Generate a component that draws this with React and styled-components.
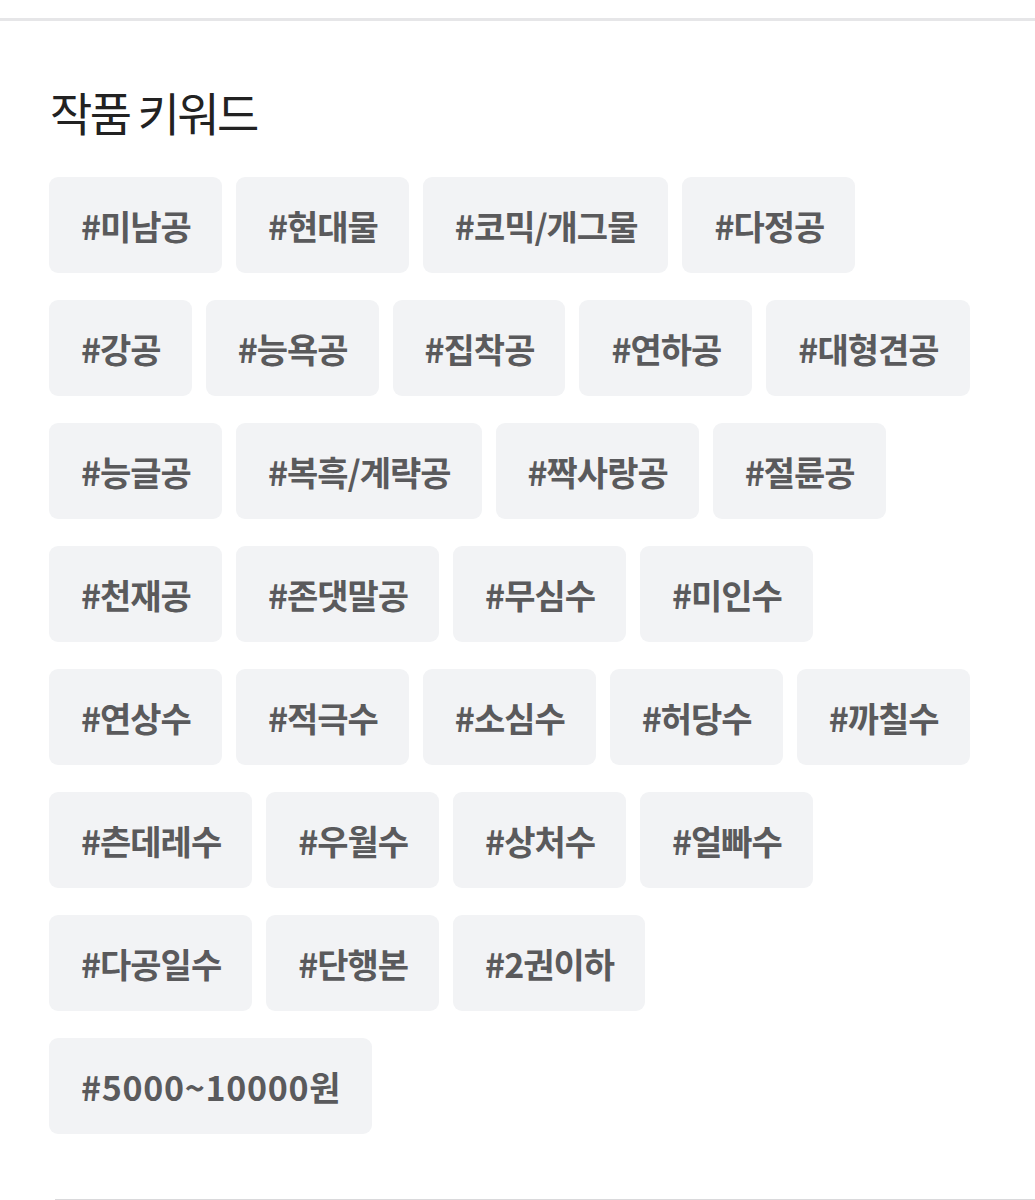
import React from 'react';
import styled, { createGlobalStyle } from 'styled-components';

const keywords = [
    '미남공', '현대물', '코믹/개그물', '다정공',
    '강공', '능욕공', '집착공', '연하공', '대형견공',
    '능글공', '복흑/계략공', '짝사랑공', '절륜공',
    '천재공', '존댓말공', '무심수', '미인수',
    '연상수', '적극수', '소심수', '허당수', '까칠수',
    '츤데레수', '우월수', '상처수', '얼빠수',
    '다공일수', '단행본', '2권이하',
    '5000~10000원',
];

const GlobalStyle = createGlobalStyle`
    body {
        margin: 0;
        background: #ffffff;
        font-family: 'Noto Sans CJK KR', 'Noto Sans', sans-serif;
    }
`

export default function App() {
    return (
        <>
            <GlobalStyle />
            <Page>
                <TopLine />
                <Section>
                    <Titulo>작품 키워드</Titulo>
                    <Lista>
                        {keywords.map(k => (
                            <Tag key={k} $digits={/^\d{3,}/.test(k)}>#{k}</Tag>
                        ))}
                    </Lista>
                </Section>
                <BottomLine />
            </Page>
        </>
    );
}

const Page = styled.div`
    width: 1035px;
    height: 1200px;
    overflow: hidden;
    padding-top: 18px;
    box-sizing: border-box;
`

const TopLine = styled.div`
    height: 3px;
    background: #e6e6e8;
`

const Section = styled.div`
    padding: 60px 0 0 49px;
`

const Titulo = styled.h2`
    margin: 0 0 0 1px;
    font-size: 46px;
    font-weight: 400;
    letter-spacing: -2.5px;
    line-height: 60px;
    color: #222222;
`

const Lista = styled.div`
    display: flex;
    flex-wrap: wrap;
    gap: 27px 14px;
    margin-top: 36px;
    width: 930px;
`

const Tag = styled.div`
    height: 96px;
    display: flex;
    align-items: center;
    padding: 0 31px 0 32px;
    background: #f2f3f5;
    border-radius: 9px;
    font-size: 34px;
    font-weight: 700;
    letter-spacing: ${p => (p.$digits ? '0.7px' : '-1px')};
    color: #5a5a5c;
`

const BottomLine = styled.div`
    margin: 65px 0 0 55px;
    height: 2px;
    background: #d9d9db;
`
